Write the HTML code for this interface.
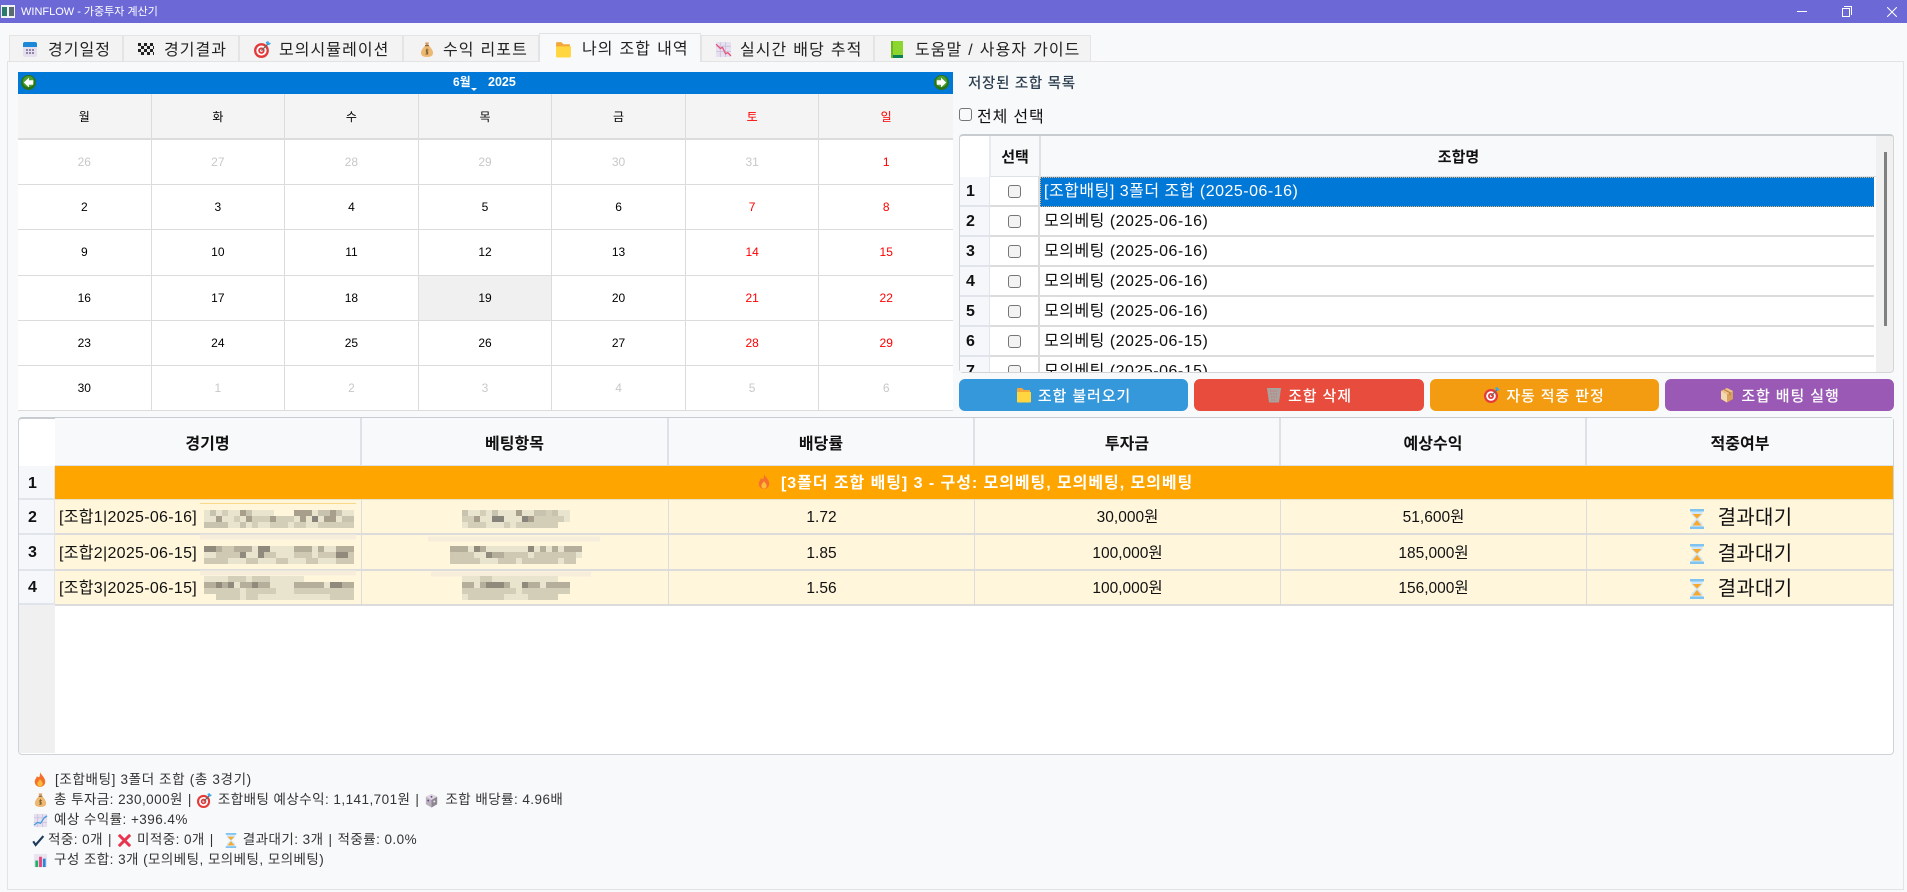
<!DOCTYPE html>
<html lang="ko"><head><meta charset="utf-8"><title>WINFLOW</title>
<style>
*{box-sizing:border-box;margin:0;padding:0}
html,body{width:1907px;height:892px;overflow:hidden;background:#f8f9fa;font-family:"Liberation Sans","Noto Sans CJK KR",sans-serif;color:#111}
.a{position:absolute}
.t{position:absolute;white-space:nowrap;line-height:20px}
.c{position:absolute;display:flex;align-items:center;justify-content:center;white-space:nowrap}
.tab{position:absolute;top:35px;height:26px;background:#f3f3f3;border:1px solid #e4e4e4;border-bottom:0}
.tl{position:absolute;top:40px;font-size:16px;line-height:22px;white-space:nowrap;color:#222;letter-spacing:1.05px;word-spacing:.5px}
svg.i{position:absolute}
.cal{position:absolute;left:18px;top:94px;width:935px;height:317px;display:grid;grid-template-columns:repeat(7,1fr);grid-template-rows:46px repeat(6,1fr);background:#fff}
.cal div{display:flex;align-items:center;justify-content:center;font-size:12px;border-right:1px solid #dcdcdc;border-bottom:1px solid #dcdcdc;color:#000}
.cal div:nth-child(7n){border-right:0}
.cal .h{background:#f4f4f4;border-bottom:2px solid #dcdcdc}
.cal .g{color:#c8c8c8}.cal .r{color:#f00}
.rh{position:absolute;background:#f5f7fa;border-bottom:2px solid #e1e4ea;border-right:1px solid #e1e4ea;font-weight:700;font-size:16px;line-height:30px;padding-left:6px}
.ln{position:absolute;left:1040px;width:835px;height:30px;border-bottom:2px solid #dcdcdc;background:#fff;font-size:16px;line-height:30px;padding-left:4px;white-space:nowrap;letter-spacing:.5px}
.cb{position:absolute;width:13px;height:13px;border:1px solid #767676;border-radius:3px;background:#f3f3f3}
.hd{position:absolute;top:418px;height:48px;background:#f8f9fa;border-right:2px solid #dee2e6;border-bottom:1px solid #dee2e6;display:flex;align-items:center;justify-content:center;font-weight:700;font-size:16px}
.row{position:absolute;left:55px;width:1838px;background:#fff6dc;border-bottom:2px solid #dcdcdc}
.d{position:absolute;display:flex;align-items:center;justify-content:center;font-size:15.5px;line-height:20px;white-space:nowrap;height:100%;top:0;border-right:1px solid #dcdcdc}
.d b{font-weight:400;display:block;height:20px;line-height:20px;overflow:visible;position:relative;top:1px}
.r3 .d b{top:2px}
.btn{position:absolute;top:379px;height:32px;border-radius:6px;color:#fff;font-size:15px;font-weight:500;display:flex;align-items:center;justify-content:center;letter-spacing:.9px}
.btn svg{margin-right:6px;flex:none}
.s{position:absolute;left:33px;white-space:nowrap;font-size:13.5px;line-height:20px;color:#333;height:20px;display:flex;align-items:center;letter-spacing:.45px}
.s svg{flex:none;margin-right:6px}
.s .m{margin:0 5px}
</style></head><body>
<svg width="0" height="0" style="position:absolute"><defs>
<symbol id="cal" viewBox="0 0 16 17"><rect x="1" y="1" width="14" height="15" rx="2" fill="#e6e0ee"/><path d="M1 6V3a2 2 0 0 1 2-2h10a2 2 0 0 1 2 2v3z" fill="#1e88d8"/><path d="M4 8h2v2H4zM7 8h2v2H7zM10 8h2v2h-2zM4 11h2v2H4zM7 11h2v2H7zM10 11h2v2h-2z" fill="#8f86a8"/></symbol>
<symbol id="chk" viewBox="0 0 16 16"><rect x="0" y="2" width="16" height="12" fill="#eee"/><path d="M0 2h3v3H0zM6 2h3v3H6zM12 2h3v3h-3zM3 5h3v3H3zM9 5h3v3H9zM0 8h3v3H0zM6 8h3v3H6zM12 8h3v3h-3zM3 11h3v3H3zM9 11h3v3H9zM15 5h1v3h-1zM15 11h1v3h-1z" fill="#222"/></symbol>
<symbol id="tgt" viewBox="0 0 16 16"><circle cx="7" cy="9" r="7" fill="#e33b3b"/><circle cx="7" cy="9" r="4.8" fill="#fff"/><circle cx="7" cy="9" r="3" fill="#e33b3b"/><circle cx="7" cy="9" r="1.2" fill="#fff"/><path d="M7 9l6-6" stroke="#666" stroke-width="1.2"/><path d="M11 1l1 2 2 1 2-2-2-.5-.5-1.500z" fill="#3aa6e8"/></symbol>
<symbol id="bag" viewBox="0 0 16 16"><path d="M6 1h4l-1 3h-2z" fill="#d59a5c"/><path d="M6.500 4h3C12 6 14 9 14 11.500 14 14 12 15.500 8 15.500S2 14 2 11.500C2 9 4 6 6.500 4z" fill="#edb872"/><rect x="6" y="3.500" width="4" height="1.200" fill="#8a6a3c"/><path d="M8 7v6M9.500 8.500H7.300v2h1.400v2H6.500" stroke="#80602f" fill="none" stroke-width=".9"/></symbol>
<symbol id="fol" viewBox="0 0 16 16"><path d="M1 2a1 1 0 0 1 1-1h4l2 2h6v3H1z" fill="#f2a73a"/><path d="M1 5h14v9.500a1 1 0 0 1-1 1H2a1 1 0 0 1-1-1z" fill="#ffd63f"/></symbol>
<symbol id="dwn" viewBox="0 0 16 16"><rect x="1" y="1" width="14" height="14" fill="#e6dff0"/><path d="M1 5h14M1 10h14M5 1v14M10 1v14" stroke="#c9bfdc" stroke-width=".8"/><path d="M1 3l4 4 2-1 3 6 2-1 3 3" stroke="#e8527a" fill="none" stroke-width="1.300"/></symbol>
<symbol id="up" viewBox="0 0 16 16"><rect x="1" y="1" width="14" height="14" fill="#e6dff0"/><path d="M1 5h14M1 10h14M5 1v14M10 1v14" stroke="#c9bfdc" stroke-width=".8"/><path d="M1 13l4-3 3 1 4-6 3-2" stroke="#3b9ae0" fill="none" stroke-width="1.300"/></symbol>
<symbol id="bk" viewBox="0 0 16 17"><rect x="2" y="0" width="12" height="17" fill="#8dd62f"/><rect x="2" y="14" width="12" height="3" fill="#0b7f55"/><rect x="2" y="0" width="2" height="17" fill="#6cb51f"/></symbol>
<symbol id="tr" viewBox="0 0 16 16"><path d="M1 1h14l-2 14.500H3z" fill="#a8a39f"/><path d="M4 4h8M4.500 7h7M5 10h6M5.300 13h5.400" stroke="#d96a60" stroke-width="1" stroke-dasharray="1.300 1.300"/></symbol>
<symbol id="box" viewBox="0 0 16 16"><path d="M8 1l6 3v8l-6 3.500L2 12V4z" fill="#d9a05e"/><path d="M8 7.500L2 4l6-3 6 3z" fill="#eec28a"/><path d="M8 7.500v8L2 12V4z" fill="#f3d9b0"/><path d="M5 2.500l6 3.200v2.500" stroke="#b07c40" fill="none"/></symbol>
<symbol id="hg" viewBox="0 0 16 20"><rect x="1" y="0" width="14" height="2.500" fill="#7fc4f0"/><rect x="1" y="17.500" width="14" height="2.500" fill="#7fc4f0"/><path d="M2.500 2.500h11v3L9 10l4.500 4.500v3h-11v-3L7 10 2.500 5.500z" fill="#cfe7f7"/><path d="M3.500 5h9L8 9.500zM8 11l4.500 5.500h-9z" fill="#f7a92e"/></symbol>
<symbol id="fi" viewBox="0 0 16 18"><path d="M8 0c1 3 6 6 6 11a6 6 0 0 1-12 0c0-3 2-4 2.500-6.500C6 6 7 6 7.500 5 8 3 8 2 8 0z" fill="#f5712b"/><path d="M8 8c1 2 3 3 3 5.500a3 3 0 0 1-6 0C5 11 7 10 8 8z" fill="#fdbb3b"/></symbol>
<symbol id="dc" viewBox="0 0 16 16"><path d="M8 1l6 3v8l-6 3.500L2 12V4z" fill="#b9b2bd"/><path d="M8 7.500L2 4l6-3 6 3z" fill="#ddd8df"/><path d="M8 7.500v8L14 12V4z" fill="#8e8792"/><circle cx="4.500" cy="8" r="1" fill="#7b3a9a"/><circle cx="11" cy="9" r="1" fill="#eee"/><circle cx="8" cy="4" r="1" fill="#7b3a9a"/></symbol>
<symbol id="x" viewBox="0 0 16 16"><path d="M2 2l12 12M14 2L2 14" stroke="#e8344e" stroke-width="3.200"/></symbol>
<symbol id="bar" viewBox="0 0 16 16"><rect x="1" y="1" width="14" height="14" fill="#e8e4f0"/><rect x="2.500" y="8" width="3" height="7" fill="#1fb36b"/><rect x="6.500" y="4" width="3" height="11" fill="#e8427a"/><rect x="10.500" y="6" width="3" height="9" fill="#2b86d8"/></symbol>
<symbol id="ck" viewBox="0 0 16 16"><path d="M1.500 9l3 4.500L14 2.500" stroke="#1c3a5c" stroke-width="2.600" fill="none"/></symbol>
<symbol id="lf" viewBox="0 0 16 16"><circle cx="8" cy="8" r="8" fill="#2a7418"/><circle cx="8" cy="7" r="6" fill="#4d9e34"/><path d="M8.500 2.800L3 8l5.500 5.200V10.400H13V5.600H8.500z" fill="#fff"/></symbol>
<symbol id="rt" viewBox="0 0 16 16"><circle cx="8" cy="8" r="8" fill="#2a7418"/><circle cx="8" cy="7" r="6" fill="#4d9e34"/><path d="M7.500 2.800L13 8l-5.500 5.200V10.400H3V5.600h4.500z" fill="#fff"/></symbol>
</defs></svg>

<!-- title bar -->
<div class="a" style="left:0;top:0;width:1907px;height:23px;background:#6c69d6"></div>
<svg class="i" style="left:1px;top:5px" width="14" height="13" viewBox="0 0 14 13"><rect width="14" height="13" fill="#eef2f2"/><rect x="1" y="2" width="5" height="9" fill="#2c7a6b"/><rect x="8" y="2" width="5" height="9" fill="#5a6a70"/></svg>
<div class="t" style="left:21px;top:1px;color:#fff;font-size:11px;line-height:22px">WINFLOW - 가중투자 계산기</div>
<div class="a" style="left:1797px;top:11px;width:10px;height:1px;background:#fff"></div>
<div class="a" style="left:1842px;top:8px;width:8px;height:9px;border:1px solid #fff"></div>
<div class="a" style="left:1844px;top:6px;width:8px;height:9px;border-top:1px solid #fff;border-right:1px solid #fff"></div>
<svg class="i" style="left:1887px;top:7px" width="10" height="10"><path d="M0 0l10 10M10 0L0 10" stroke="#fff" stroke-width="1"/></svg>

<!-- tabs -->
<div class="tab" style="left:9px;width:114px"></div>
<div class="tab" style="left:123px;width:116px"></div>
<div class="tab" style="left:239px;width:164px"></div>
<div class="tab" style="left:403px;width:136px"></div>
<div class="tab" style="left:701px;width:173px"></div>
<div class="tab" style="left:874px;width:217px"></div>
<!-- pane -->
<div class="a" style="left:7px;top:61px;width:1897px;height:829px;background:#f8f9fa;border:1px solid #e3e3e3"></div>
<div class="a" style="left:539px;top:33px;width:162px;height:29px;background:#f8f9fa;border:1px solid #e3e3e3;border-bottom:0"></div>

<svg class="i" style="left:22px;top:41px" width="16" height="17"><use href="#cal"/></svg><div class="tl" style="left:48px">경기일정</div>
<svg class="i" style="left:138px;top:41px" width="16" height="16"><use href="#chk"/></svg><div class="tl" style="left:164px">경기결과</div>
<svg class="i" style="left:254px;top:41px" width="17" height="17"><use href="#tgt"/></svg><div class="tl" style="left:279px">모의시뮬레이션</div>
<svg class="i" style="left:419px;top:41px" width="16" height="17"><use href="#bag"/></svg><div class="tl" style="left:443px">수익 리포트</div>
<svg class="i" style="left:555px;top:41px" width="17" height="17"><use href="#fol"/></svg><div class="tl" style="left:582px;top:39px">나의 조합 내역</div>
<svg class="i" style="left:715px;top:41px" width="17" height="17"><use href="#dwn"/></svg><div class="tl" style="left:740px">실시간 배당 추적</div>
<svg class="i" style="left:889px;top:41px" width="16" height="17"><use href="#bk"/></svg><div class="tl" style="left:915px">도움말 / 사용자 가이드</div>

<!-- calendar nav -->
<div class="a" style="left:18px;top:72px;width:935px;height:22px;background:#0078d7"></div>
<svg class="i" style="left:21px;top:75px" width="15" height="15"><use href="#lf"/></svg>
<svg class="i" style="left:934px;top:75px" width="15" height="15"><use href="#rt"/></svg>
<div class="t" style="left:453px;top:72px;color:#fff;font-size:12px;font-weight:700;line-height:21px">6월</div>
<div class="a" style="left:471px;top:88px;width:0;height:0;border-left:3px solid transparent;border-right:3px solid transparent;border-top:3px solid #fff"></div>
<div class="t" style="left:488px;top:72px;color:#fff;font-size:12.5px;font-weight:700;line-height:21px">2025</div>

<div class="cal">
<div class="h">월</div><div class="h">화</div><div class="h">수</div><div class="h">목</div><div class="h">금</div><div class="h r">토</div><div class="h r">일</div>
<div class="g">26</div><div class="g">27</div><div class="g">28</div><div class="g">29</div><div class="g">30</div><div class="g">31</div><div class="r">1</div>
<div>2</div><div>3</div><div>4</div><div>5</div><div>6</div><div class="r">7</div><div class="r">8</div>
<div>9</div><div>10</div><div>11</div><div>12</div><div>13</div><div class="r">14</div><div class="r">15</div>
<div>16</div><div>17</div><div>18</div><div style="background:#f0f0f0">19</div><div>20</div><div class="r">21</div><div class="r">22</div>
<div>23</div><div>24</div><div>25</div><div>26</div><div>27</div><div class="r">28</div><div class="r">29</div>
<div>30</div><div class="g">1</div><div class="g">2</div><div class="g">3</div><div class="g">4</div><div class="g">5</div><div class="g">6</div>
</div>

<!-- right panel -->
<div class="t" style="left:968px;top:74px;font-size:14.5px;font-weight:500;color:#2c3e50;letter-spacing:.7px">저장된 조합 목록</div>
<div class="cb" style="left:959px;top:108px;background:#f8f9fa"></div>
<div class="t" style="left:977px;top:108px;font-size:16px;letter-spacing:.85px">전체 선택</div>

<div class="a" style="left:959px;top:134px;width:935px;height:239px;background:#fff;border:1px solid #d4d4d4;border-top:2px solid #c8ccd0;border-radius:4px;overflow:hidden">
 <div class="a" style="left:29px;top:0;width:52px;height:41px;background:#f8f9fa;border-right:2px solid #dee2e6;border-left:2px solid #e8eaee;border-bottom:1px solid #dee2e6;display:flex;align-items:center;justify-content:center;font-weight:700;font-size:15px">선택</div>
 <div class="a" style="left:81px;top:0;width:835px;height:41px;background:#f8f9fa;border-bottom:1px solid #dee2e6;display:flex;align-items:center;justify-content:center;font-weight:700;font-size:15px">조합명</div>
 <div class="a" style="left:916px;top:0;width:18px;height:240px;background:#f0f0f0"></div>
 <div class="a" style="left:924px;top:16px;width:3px;height:174px;background:#808080"></div>
</div>
<div class="a" style="left:960px;top:136px;width:914px;height:236px;overflow:hidden">
 <div class="rh" style="left:0;top:41px;width:30px;height:30px">1</div>
 <div class="rh" style="left:0;top:71px;width:30px;height:30px">2</div>
 <div class="rh" style="left:0;top:101px;width:30px;height:30px">3</div>
 <div class="rh" style="left:0;top:131px;width:30px;height:30px">4</div>
 <div class="rh" style="left:0;top:161px;width:30px;height:30px">5</div>
 <div class="rh" style="left:0;top:191px;width:30px;height:30px">6</div>
 <div class="rh" style="left:0;top:221px;width:30px;height:30px">7</div>
 <div class="a" style="left:30px;top:41px;width:50px;height:210px;background:#fff;border-right:2px solid #dcdcdc"></div>
 <div class="a" style="left:30px;top:69px;width:50px;height:2px;background:#dcdcdc"></div>
 <div class="a" style="left:30px;top:99px;width:50px;height:2px;background:#dcdcdc"></div>
 <div class="a" style="left:30px;top:129px;width:50px;height:2px;background:#dcdcdc"></div>
 <div class="a" style="left:30px;top:159px;width:50px;height:2px;background:#dcdcdc"></div>
 <div class="a" style="left:30px;top:189px;width:50px;height:2px;background:#dcdcdc"></div>
 <div class="a" style="left:30px;top:219px;width:50px;height:2px;background:#dcdcdc"></div>
 <div class="cb" style="left:48px;top:49px"></div><div class="cb" style="left:48px;top:79px"></div><div class="cb" style="left:48px;top:109px"></div><div class="cb" style="left:48px;top:139px"></div><div class="cb" style="left:48px;top:169px"></div><div class="cb" style="left:48px;top:199px"></div><div class="cb" style="left:48px;top:229px"></div>
 <div class="ln" style="left:80px;top:41px;background:#0078d7;color:#fff;border:1px dotted #e8b070;padding-left:3px;line-height:28px">[조합배팅] 3폴더 조합 (2025-06-16)</div>
 <div class="ln" style="left:80px;top:71px">모의베팅 (2025-06-16)</div>
 <div class="ln" style="left:80px;top:101px">모의베팅 (2025-06-16)</div>
 <div class="ln" style="left:80px;top:131px">모의베팅 (2025-06-16)</div>
 <div class="ln" style="left:80px;top:161px">모의베팅 (2025-06-16)</div>
 <div class="ln" style="left:80px;top:191px">모의베팅 (2025-06-15)</div>
 <div class="ln" style="left:80px;top:221px">모의베팅 (2025-06-15)</div>
</div>

<!-- buttons -->
<div class="btn" style="left:959px;width:229px;background:#3498db"><svg width="16" height="16"><use href="#fol"/></svg>조합 불러오기</div>
<div class="btn" style="left:1194px;width:230px;background:#e74c3c"><svg width="16" height="16"><use href="#tr"/></svg>조합 삭제</div>
<div class="btn" style="left:1430px;width:229px;background:#f39c12"><svg width="16" height="16"><use href="#tgt"/></svg>자동 적중 판정</div>
<div class="btn" style="left:1665px;width:229px;background:#9b59b6"><svg width="16" height="16"><use href="#box"/></svg>조합 배팅 실행</div>

<!-- big table -->
<div class="a" style="left:18px;top:417px;width:1876px;height:338px;background:#fff;border:1px solid #cfd3d8;border-top:2px solid #c8ccd0;border-radius:4px;overflow:hidden"></div>
<div class="a" style="left:19px;top:605px;width:36px;height:148px;background:#f0f0f0"></div>
<div class="hd" style="left:55px;width:307px">경기명</div>
<div class="hd" style="left:362px;width:307px">베팅항목</div>
<div class="hd" style="left:669px;width:306px">배당률</div>
<div class="hd" style="left:975px;width:306px">투자금</div>
<div class="hd" style="left:1281px;width:306px">예상수익</div>
<div class="hd" style="left:1587px;width:306px;border-right:0">적중여부</div>
<div class="rh" style="left:19px;top:466px;width:36px;height:34px;line-height:35px;padding-left:9px">1</div>
<div class="rh" style="left:19px;top:500px;width:36px;height:35px;line-height:35px;padding-left:9px">2</div>
<div class="rh" style="left:19px;top:535px;width:36px;height:36px;line-height:35px;padding-left:9px">3</div>
<div class="rh" style="left:19px;top:571px;width:36px;height:34px;line-height:34px;padding-left:9px">4</div>

<div class="row" style="top:466px;height:34px;background:#ffa500;border-bottom:1px solid #e9e2c8"></div>
<svg class="i" style="left:757px;top:474px" width="14" height="16"><use href="#fi"/></svg>
<div class="t" style="left:781px;top:474px;color:#fff;font-weight:700;font-size:16px;letter-spacing:.95px">[3폴더 조합 배팅] 3 - 구성: 모의베팅, 모의베팅, 모의베팅</div>

<div class="row" style="top:500px;height:35px">
 <div class="d" style="left:0;width:307px;justify-content:flex-start;padding-left:4px;font-size:16px;letter-spacing:.3px"><b>[조합1|2025-06-16]</b></div><div class="d" style="left:307px;width:307px"></div><div class="d" style="left:614px;width:306px"><b>1.72</b></div><div class="d" style="left:920px;width:306px"><b>30,000원</b></div><div class="d" style="left:1226px;width:306px"><b>51,600원</b></div><div class="d" style="left:1532px;width:306px;border:0;font-size:20px;padding-left:30px;letter-spacing:.3px"><b>결과대기</b></div>
</div>
<div class="row r3" style="top:535px;height:36px">
 <div class="d" style="left:0;width:307px;justify-content:flex-start;padding-left:4px;font-size:16px;letter-spacing:.3px"><b>[조합2|2025-06-15]</b></div><div class="d" style="left:307px;width:307px"></div><div class="d" style="left:614px;width:306px"><b>1.85</b></div><div class="d" style="left:920px;width:306px"><b>100,000원</b></div><div class="d" style="left:1226px;width:306px"><b>185,000원</b></div><div class="d" style="left:1532px;width:306px;border:0;font-size:20px;padding-left:30px;letter-spacing:.3px"><b>결과대기</b></div>
</div>
<div class="row" style="top:571px;height:35px">
 <div class="d" style="left:0;width:307px;justify-content:flex-start;padding-left:4px;font-size:16px;letter-spacing:.3px"><b>[조합3|2025-06-15]</b></div><div class="d" style="left:307px;width:307px"></div><div class="d" style="left:614px;width:306px"><b>1.56</b></div><div class="d" style="left:920px;width:306px"><b>100,000원</b></div><div class="d" style="left:1226px;width:306px"><b>156,000원</b></div><div class="d" style="left:1532px;width:306px;border:0;font-size:20px;padding-left:30px;letter-spacing:.3px"><b>결과대기</b></div>
</div>
<svg class="i" style="left:1689px;top:509px" width="16" height="20"><use href="#hg"/></svg>
<svg class="i" style="left:1689px;top:544px" width="16" height="20"><use href="#hg"/></svg>
<svg class="i" style="left:1689px;top:579px" width="16" height="20"><use href="#hg"/></svg>

<!-- mosaics -->
<svg class="a" style="left:190px;top:495px" width="420" height="115" viewBox="190 495 420 115" fill="none" stroke-width="6">
<path d="M200 503.500h156" stroke="#f8d98a" stroke-width="1"/>
<path d="M200 537h156M200 573h156M428 539h172M431 574h160" stroke="#f6eedb" stroke-width="5"/>
<path stroke="#e9e4ce" d="M204 513h70M294 513h60M204 519h150M204 525h150M462 513h108M462 519h108M462 525h96M204 549h150M204 555h150M204 561h150M450 549h132M450 555h132M450 561h126M204 585h150M204 591h150M204 579h100M462 579h96M462 585h108M462 591h108M462 597h96M216 597h130"/>
<path stroke="#c8c3ae" d="M210 513h6M222 513h6M246 513h6M318 513h12M336 513h6M342 519h12M204 525h24M240 525h6M462 513h6M492 513h6M534 513h24"/>
<path stroke="#a89e8c" d="M240 513h6M294 513h18M330 513h6M216 519h6M246 519h6M270 519h6M300 519h6M324 519h6M330 519h6M480 513h6M516 513h6M474 519h6M528 519h6"/>
<path stroke="#86847a" d="M312 519h6M492 519h12M522 519h6"/>
<path stroke="#d3ceb8" d="M234 519h6M252 519h18M276 519h18M252 525h6M270 525h18M294 525h12M318 525h36M468 525h18M504 525h6M516 525h42M222 513h6M462 519h12M480 513h6M534 519h30M546 513h6"/>
<path stroke="#b5ae9a" d="M204 549h18M234 549h18M258 549h6M294 549h18M318 549h6M336 549h18M450 549h18M474 549h12M486 555h18M540 549h6M552 549h6M564 549h18"/>
<path stroke="#8f8a7c" d="M204 549h12M240 555h6M258 549h12M258 555h6M336 555h12M474 549h6M486 555h6M528 549h6"/>
<path stroke="#cfc9b3" d="M216 555h24M264 555h12M276 561h12M294 555h18M318 555h18M348 555h6M222 549h12M204 561h24M246 561h12M306 561h12M336 561h18M450 555h24M504 555h24M534 555h18M552 555h24M450 561h30M498 561h18M522 561h36M564 561h12"/>
<path stroke="#b5ae9a" d="M204 585h30M240 585h30M294 585h30M336 585h18M462 585h12M480 585h12M504 585h6M522 585h18M546 585h24"/>
<path stroke="#8f8a7c" d="M216 585h6M228 585h6M252 585h6M330 585h12M486 585h18M522 585h6"/>
<path stroke="#d3ceb8" d="M204 591h36M246 591h30M294 591h60M462 591h54M522 591h48M228 579h18M252 579h18M480 579h12M216 597h24M246 597h12M330 597h24M468 597h36M528 597h30"/>
</svg>

<!-- summary -->
<div class="s" style="top:770px;letter-spacing:.65px"><svg width="14" height="16" style="margin-right:8px"><use href="#fi"/></svg>[조합배팅] 3폴더 조합 (총 3경기)</div>
<div class="s" style="top:790px"><svg width="15" height="16"><use href="#bag"/></svg>총 투자금: 230,000원<span class="m">|</span><svg width="15" height="15"><use href="#tgt"/></svg>조합배팅 예상수익: 1,141,701원<span class="m">|</span><svg width="15" height="15"><use href="#dc"/></svg>조합 배당률: 4.96배</div>
<div class="s" style="top:810px"><svg width="15" height="15"><use href="#up"/></svg>예상 수익률: +396.4%</div>
<div class="s" style="top:830px;left:32px"><svg width="13" height="13" style="margin-right:3px"><use href="#ck"/></svg>적중: 0개<span class="m">|</span><svg width="15" height="15" style="margin-right:5px"><use href="#x"/></svg>미적중: 0개<span class="m">|</span><svg width="12" height="15" style="margin:0 6px"><use href="#hg"/></svg>결과대기: 3개<span class="m">|</span>적중률: 0.0%</div>
<div class="s" style="top:850px"><svg width="15" height="15"><use href="#bar"/></svg>구성 조합: 3개 (모의베팅, 모의베팅, 모의베팅)</div>
</body></html>
